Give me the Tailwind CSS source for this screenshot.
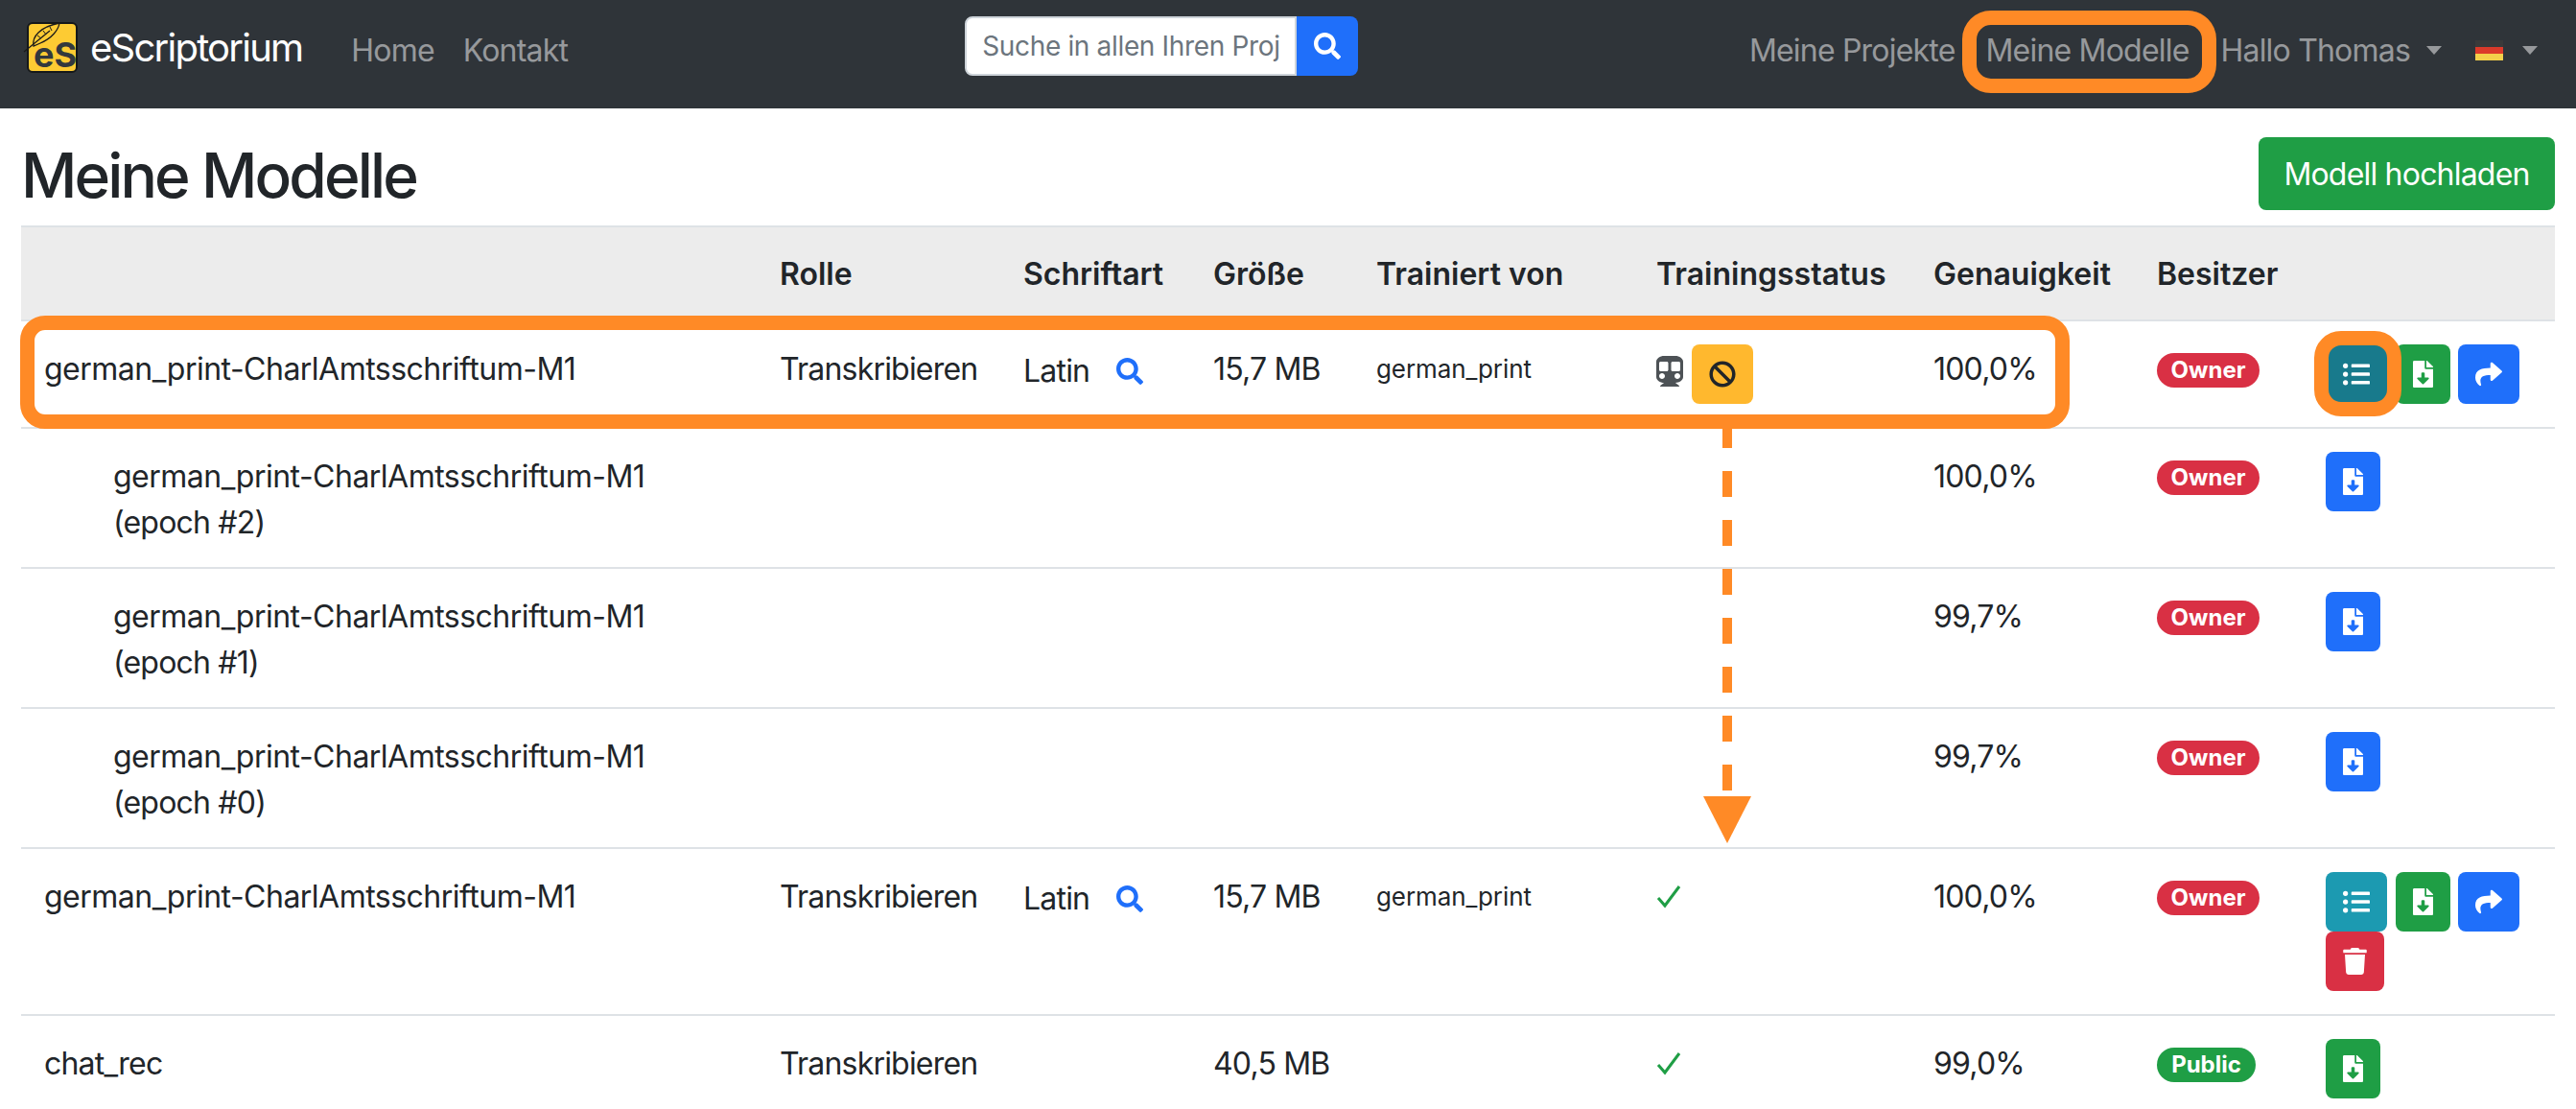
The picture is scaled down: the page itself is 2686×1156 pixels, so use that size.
<!DOCTYPE html>
<html lang="de">
<head>
  <meta charset="UTF-8" />
  <title>eScriptorium - Meine Modelle</title>
  <script src="https://cdn.jsdelivr.net/npm/@tailwindcss/browser@4"></script>
</head>
<body class="relative h-[1156px] overflow-hidden bg-white font-['Inter',sans-serif] text-[32px] leading-[48px] tracking-[-0.025em] text-[#212529]">
  <!-- Navbar -->
  <nav class="flex h-[113px] items-center bg-[#2f3439] pb-[8px] pl-[28px] pr-[40px]">
    <div class="relative mb-[7px] h-[53px] w-[53px] shrink-0 rounded-[6px] border-2 border-[#15181a] bg-[#fdcb33]">
      <svg class="absolute left-[-2px] top-[-2px] size-[53px] overflow-visible" viewBox="0 0 53 53" fill="none" stroke="#1a1a1a" stroke-width="1.3">
        <path d="M-3 31 L24 9" />
        <path d="M7 25 C5 15 14 5 34 1 C33 8 26 17 14 22 Z" />
        <path d="M11 14 L15 17 M17 9 L20 13 M24 5 L26 9" stroke-width="1" />
      </svg>
      <span class="absolute left-[5px] top-[14px] text-[36px] font-bold leading-[36px] tracking-normal text-[#33383d]">eS</span>
    </div>
    <a class="mb-[5px] ml-[13px] text-[40px] leading-[56px] tracking-[-0.044em] text-white">eScriptorium</a>
    <a class="ml-[51px] text-white/50">Home</a>
    <a class="ml-[30px] text-white/50">Kontakt</a>
    <form class="mb-[9px] ml-[414px] flex h-[62px] w-[410px] shrink-0">
      <input type="text" placeholder="Suche in allen Ihren Projekten" class="h-full w-[346px] rounded-l-[8px] border-2 border-[#ced4da] bg-white px-[16px] text-[28px] tracking-[-0.012em] outline-none placeholder:text-[#6c757d]" />
      <button type="button" class="flex w-[64px] items-center justify-center rounded-r-[8px] bg-[#1f6ffa]">
        <svg class="size-[28px]" viewBox="0 0 512 512" fill="#fff"><path d="M505 442.7L405.3 343c-4.5-4.5-10.6-7-17-7H372c27.6-35.3 44-79.7 44-128C416 93.1 322.9 0 208 0S0 93.1 0 208s93.1 208 208 208c48.3 0 92.7-16.4 128-44v16.3c0 6.4 2.5 12.5 7 17l99.7 99.7c9.4 9.4 24.6 9.4 33.9 0l28.3-28.3c9.4-9.4 9.4-24.6.1-34zM208 336c-70.7 0-128-57.2-128-128 0-70.7 57.2-128 128-128 70.7 0 128 57.2 128 128 0 70.7-57.2 128-128 128z"/></svg>
      </button>
    </form>
    <div class="ml-auto flex items-center text-white/50">
      <a>Meine Projekte</a>
      <a class="ml-[32px]">Meine Modelle</a>
      <a class="ml-[33px]">Hallo Thomas</a>
      <span class="ml-[17px] size-0 border-x-[8.5px] border-t-[9px] border-x-transparent border-t-[#97999c]"></span>
      <div class="ml-[35px] flex h-[21px] w-[29px] flex-col">
        <span class="h-[7px] bg-[#3a3a3a]"></span>
        <span class="h-[7px] bg-[#dc3a2a]"></span>
        <span class="h-[7px] bg-[#f4d04a]"></span>
      </div>
      <span class="ml-[20px] size-0 border-x-[8.5px] border-t-[9px] border-x-transparent border-t-[#97999c]"></span>
    </div>
  </nav>

  <main class="px-[22px]">
    <div class="flex h-[122px] justify-between">
      <h2 class="mt-[32px] text-[64px] font-medium leading-[76px] tracking-[-0.045em]">Meine Modelle</h2>
      <button class="mt-[30px] h-[76px] w-[309px] rounded-[8px] bg-[#1f9e45] pt-[2px] text-white">Modell hochladen</button>
    </div>

    <table class="w-[2642px] table-fixed border-separate border-spacing-0 text-left">
      <colgroup>
        <col class="w-[767px]" /><col class="w-[254px]" /><col class="w-[198px]" /><col class="w-[170px]" /><col class="w-[292px]" /><col class="w-[289px]" /><col class="w-[233px]" /><col class="w-[176px]" /><col class="w-[263px]" />
      </colgroup>
      <thead class="bg-[#ececec]">
        <tr class="tracking-normal [&>th]:border-y-2 [&>th]:border-[#dee2e6] [&>th]:px-[24px] [&>th]:pb-[23px] [&>th]:pt-[25px] [&>th]:font-semibold">
          <th></th><th>Rolle</th><th>Schriftart</th><th>Größe</th><th>Trainiert von</th><th>Trainingsstatus</th><th>Genauigkeit</th><th>Besitzer</th><th></th>
        </tr>
      </thead>
      <tbody class="[&_td]:border-b-2 [&_td]:border-[#dee2e6] [&_td]:px-[24px] [&_td]:pb-[22px] [&_td]:pt-[26px] [&_td]:align-top">
        <tr>
          <td class="tracking-[-0.016em]">german_print-CharlAmtsschriftum-M1</td>
          <td>Transkribieren</td>
          <td><span class="relative top-[2px] flex items-center gap-[28px]">Latin
            <svg class="size-[28px]" viewBox="0 0 512 512" fill="#1f6ffa"><path d="M505 442.7L405.3 343c-4.5-4.5-10.6-7-17-7H372c27.6-35.3 44-79.7 44-128C416 93.1 322.9 0 208 0S0 93.1 0 208s93.1 208 208 208c48.3 0 92.7-16.4 128-44v16.3c0 6.4 2.5 12.5 7 17l99.7 99.7c9.4 9.4 24.6 9.4 33.9 0l28.3-28.3c9.4-9.4 9.4-24.6.1-34zM208 336c-70.7 0-128-57.2-128-128 0-70.7 57.2-128 128-128 70.7 0 128 57.2 128 128 0 70.7-57.2 128-128 128z"/></svg></span></td>
          <td>15,7 MB</td>
          <td class="text-[26px] tracking-[-0.004em]">german_print</td>
          <td><div class="relative -top-[2px] flex items-center gap-[9px]">
            <svg class="-mt-[6px] h-[32px] w-[28px]" viewBox="0 0 448 512" fill="#4d5256"><path d="M448 96v256c0 51.815-61.624 96-130.022 96l62.98 49.721C386.905 502.417 383.562 512 376 512H72c-7.578 0-10.892-9.594-4.957-14.279L130.022 448C61.82 448 0 403.954 0 352V96C0 42.981 64 0 128 0h192c65 0 128 42.981 128 96zM200 232V120c0-13.255-10.745-24-24-24H72c-13.255 0-24 10.745-24 24v112c0 13.255 10.745 24 24 24h104c13.255 0 24-10.745 24-24zm200 0V120c0-13.255-10.745-24-24-24H272c-13.255 0-24 10.745-24 24v112c0 13.255 10.745 24 24 24h104c13.255 0 24-10.745 24-24zm-48 56c-26.51 0-48 21.49-48 48s21.49 48 48 48 48-21.49 48-48-21.49-48-48-48zm-256 0c-26.51 0-48 21.49-48 48s21.49 48 48 48 48-21.49 48-48-21.49-48-48-48z"/></svg>
            <span class="flex h-[62px] w-[64px] items-center justify-center rounded-[8px] bg-[#ffb82e]">
              <svg class="size-[28px]" viewBox="0 0 512 512" fill="#212529"><path d="M256 8C119.034 8 8 119.033 8 256s111.034 248 248 248 248-111.034 248-248S392.967 8 256 8zm130.108 117.892c65.448 65.448 70 165.481 20.677 235.637L150.47 105.216c70.204-49.356 170.226-44.735 235.638 20.676zM125.892 386.108c-65.448-65.448-70-165.481-20.677-235.637L361.53 406.784c-70.203 49.356-170.226 44.736-235.638-20.676z"/></svg>
            </span>
          </div></td>
          <td>100,0%</td>
          <td><span class="mt-[7px] flex h-[36px] w-[107px] items-center justify-center rounded-full bg-[#d93044] text-[24px] font-bold tracking-normal text-white">Owner</span></td>
          <td><div class="relative -top-[2px] flex flex-wrap gap-x-[8px]">
            <a class="flex h-[62px] w-[64px] items-center justify-center rounded-[8px] bg-[#187a8c]">
              <svg class="size-[28px]" viewBox="0 0 512 512" fill="#fff"><path d="M48 48a48 48 0 1 0 48 48 48 48 0 0 0-48-48zm0 160a48 48 0 1 0 48 48 48 48 0 0 0-48-48zm0 160a48 48 0 1 0 48 48 48 48 0 0 0-48-48zm448 16H176a16 16 0 0 0-16 16v32a16 16 0 0 0 16 16h320a16 16 0 0 0 16-16v-32a16 16 0 0 0-16-16zm0-320H176a16 16 0 0 0-16 16v32a16 16 0 0 0 16 16h320a16 16 0 0 0 16-16V80a16 16 0 0 0-16-16zm0 160H176a16 16 0 0 0-16 16v32a16 16 0 0 0 16 16h320a16 16 0 0 0 16-16v-32a16 16 0 0 0-16-16z"/></svg></a>
            <a class="ml-px flex h-[62px] w-[57px] items-center justify-center rounded-[8px] bg-[#1f9e45]">
              <svg class="h-[28px] w-[21px]" viewBox="0 0 384 512" fill="#fff"><path d="M224 136V0H24C10.7 0 0 10.7 0 24v464c0 13.3 10.7 24 24 24h336c13.3 0 24-10.7 24-24V160H248c-13.2 0-24-10.8-24-24zm76.45 211.36l-96.42 95.7c-6.65 6.61-17.39 6.61-24.04 0l-96.42-95.7C73.42 337.29 80.54 320 94.82 320H160v-80c0-8.84 7.16-16 16-16h32c8.84 0 16 7.16 16 16v80h65.18c14.28 0 21.4 17.29 11.27 27.36zM377 105L279.1 7c-4.5-4.5-10.6-7-17-7H256v128h128v-6.1c0-6.3-2.5-12.4-7-16.9z"/></svg></a>
            <a class="flex h-[62px] w-[64px] items-center justify-center rounded-[8px] bg-[#1f6ffa]">
              <svg class="size-[28px]" viewBox="0 0 512 512" fill="#fff"><path d="M503.691 189.836L327.687 37.851C312.281 24.546 288 35.347 288 56.015v80.053C127.371 137.907 0 170.1 0 322.326c0 61.441 39.581 122.309 83.333 154.132 13.653 9.931 33.111-2.533 28.077-18.631C66.066 312.814 132.917 274.316 288 272.085V360c0 20.7 24.3 31.453 39.687 18.164l176.004-152c11.071-9.562 11.086-26.753 0-36.328z"/></svg></a>
          </div></td>
        </tr>

        <tr>
          <td><div class="pl-[72px] tracking-[-0.016em]">german_print-CharlAmtsschriftum-M1<br /><span class="tracking-[-0.025em]">(epoch #2)</span></div></td>
          <td></td><td></td><td></td><td></td><td></td>
          <td>100,0%</td>
          <td><span class="mt-[7px] flex h-[36px] w-[107px] items-center justify-center rounded-full bg-[#d93044] text-[24px] font-bold tracking-normal text-white">Owner</span></td>
          <td><a class="relative -top-[2px] flex h-[62px] w-[57px] items-center justify-center rounded-[8px] bg-[#1f6ffa]">
            <svg class="h-[28px] w-[21px]" viewBox="0 0 384 512" fill="#fff"><path d="M224 136V0H24C10.7 0 0 10.7 0 24v464c0 13.3 10.7 24 24 24h336c13.3 0 24-10.7 24-24V160H248c-13.2 0-24-10.8-24-24zm76.45 211.36l-96.42 95.7c-6.65 6.61-17.39 6.61-24.04 0l-96.42-95.7C73.42 337.29 80.54 320 94.82 320H160v-80c0-8.84 7.16-16 16-16h32c8.84 0 16 7.16 16 16v80h65.18c14.28 0 21.4 17.29 11.27 27.36zM377 105L279.1 7c-4.5-4.5-10.6-7-17-7H256v128h128v-6.1c0-6.3-2.5-12.4-7-16.9z"/></svg></a></td>
        </tr>
        <tr>
          <td><div class="pl-[72px] tracking-[-0.016em]">german_print-CharlAmtsschriftum-M1<br /><span class="tracking-[-0.025em]">(epoch #1)</span></div></td>
          <td></td><td></td><td></td><td></td><td></td>
          <td>99,7%</td>
          <td><span class="mt-[7px] flex h-[36px] w-[107px] items-center justify-center rounded-full bg-[#d93044] text-[24px] font-bold tracking-normal text-white">Owner</span></td>
          <td><a class="relative -top-[2px] flex h-[62px] w-[57px] items-center justify-center rounded-[8px] bg-[#1f6ffa]">
            <svg class="h-[28px] w-[21px]" viewBox="0 0 384 512" fill="#fff"><path d="M224 136V0H24C10.7 0 0 10.7 0 24v464c0 13.3 10.7 24 24 24h336c13.3 0 24-10.7 24-24V160H248c-13.2 0-24-10.8-24-24zm76.45 211.36l-96.42 95.7c-6.65 6.61-17.39 6.61-24.04 0l-96.42-95.7C73.42 337.29 80.54 320 94.82 320H160v-80c0-8.84 7.16-16 16-16h32c8.84 0 16 7.16 16 16v80h65.18c14.28 0 21.4 17.29 11.27 27.36zM377 105L279.1 7c-4.5-4.5-10.6-7-17-7H256v128h128v-6.1c0-6.3-2.5-12.4-7-16.9z"/></svg></a></td>
        </tr>
        <tr>
          <td><div class="pl-[72px] tracking-[-0.016em]">german_print-CharlAmtsschriftum-M1<br /><span class="tracking-[-0.025em]">(epoch #0)</span></div></td>
          <td></td><td></td><td></td><td></td><td></td>
          <td>99,7%</td>
          <td><span class="mt-[7px] flex h-[36px] w-[107px] items-center justify-center rounded-full bg-[#d93044] text-[24px] font-bold tracking-normal text-white">Owner</span></td>
          <td><a class="relative -top-[2px] flex h-[62px] w-[57px] items-center justify-center rounded-[8px] bg-[#1f6ffa]">
            <svg class="h-[28px] w-[21px]" viewBox="0 0 384 512" fill="#fff"><path d="M224 136V0H24C10.7 0 0 10.7 0 24v464c0 13.3 10.7 24 24 24h336c13.3 0 24-10.7 24-24V160H248c-13.2 0-24-10.8-24-24zm76.45 211.36l-96.42 95.7c-6.65 6.61-17.39 6.61-24.04 0l-96.42-95.7C73.42 337.29 80.54 320 94.82 320H160v-80c0-8.84 7.16-16 16-16h32c8.84 0 16 7.16 16 16v80h65.18c14.28 0 21.4 17.29 11.27 27.36zM377 105L279.1 7c-4.5-4.5-10.6-7-17-7H256v128h128v-6.1c0-6.3-2.5-12.4-7-16.9z"/></svg></a></td>
        </tr>

        <tr>
          <td class="tracking-[-0.016em]">german_print-CharlAmtsschriftum-M1</td>
          <td>Transkribieren</td>
          <td><span class="relative top-[2px] flex items-center gap-[28px]">Latin
            <svg class="size-[28px]" viewBox="0 0 512 512" fill="#1f6ffa"><path d="M505 442.7L405.3 343c-4.5-4.5-10.6-7-17-7H372c27.6-35.3 44-79.7 44-128C416 93.1 322.9 0 208 0S0 93.1 0 208s93.1 208 208 208c48.3 0 92.7-16.4 128-44v16.3c0 6.4 2.5 12.5 7 17l99.7 99.7c9.4 9.4 24.6 9.4 33.9 0l28.3-28.3c9.4-9.4 9.4-24.6.1-34zM208 336c-70.7 0-128-57.2-128-128 0-70.7 57.2-128 128-128 70.7 0 128 57.2 128 128 0 70.7-57.2 128-128 128z"/></svg></span></td>
          <td>15,7 MB</td>
          <td class="text-[26px] tracking-[-0.004em]">german_print</td>
          <td><svg class="mt-[11px] size-[26px]" viewBox="0 0 26 26" fill="none" stroke="#1f9e45" stroke-width="3"><path d="M2 14l7 8L24 2" /></svg></td>
          <td>100,0%</td>
          <td><span class="mt-[7px] flex h-[36px] w-[107px] items-center justify-center rounded-full bg-[#d93044] text-[24px] font-bold tracking-normal text-white">Owner</span></td>
          <td><div class="relative -top-[2px] flex flex-wrap gap-x-[8px]">
            <a class="flex h-[62px] w-[64px] items-center justify-center rounded-[8px] bg-[#1c9ab1]">
              <svg class="size-[28px]" viewBox="0 0 512 512" fill="#fff"><path d="M48 48a48 48 0 1 0 48 48 48 48 0 0 0-48-48zm0 160a48 48 0 1 0 48 48 48 48 0 0 0-48-48zm0 160a48 48 0 1 0 48 48 48 48 0 0 0-48-48zm448 16H176a16 16 0 0 0-16 16v32a16 16 0 0 0 16 16h320a16 16 0 0 0 16-16v-32a16 16 0 0 0-16-16zm0-320H176a16 16 0 0 0-16 16v32a16 16 0 0 0 16 16h320a16 16 0 0 0 16-16V80a16 16 0 0 0-16-16zm0 160H176a16 16 0 0 0-16 16v32a16 16 0 0 0 16 16h320a16 16 0 0 0 16-16v-32a16 16 0 0 0-16-16z"/></svg></a>
            <a class="ml-px flex h-[62px] w-[57px] items-center justify-center rounded-[8px] bg-[#1f9e45]">
              <svg class="h-[28px] w-[21px]" viewBox="0 0 384 512" fill="#fff"><path d="M224 136V0H24C10.7 0 0 10.7 0 24v464c0 13.3 10.7 24 24 24h336c13.3 0 24-10.7 24-24V160H248c-13.2 0-24-10.8-24-24zm76.45 211.36l-96.42 95.7c-6.65 6.61-17.39 6.61-24.04 0l-96.42-95.7C73.42 337.29 80.54 320 94.82 320H160v-80c0-8.84 7.16-16 16-16h32c8.84 0 16 7.16 16 16v80h65.18c14.28 0 21.4 17.29 11.27 27.36zM377 105L279.1 7c-4.5-4.5-10.6-7-17-7H256v128h128v-6.1c0-6.3-2.5-12.4-7-16.9z"/></svg></a>
            <a class="flex h-[62px] w-[64px] items-center justify-center rounded-[8px] bg-[#1f6ffa]">
              <svg class="size-[28px]" viewBox="0 0 512 512" fill="#fff"><path d="M503.691 189.836L327.687 37.851C312.281 24.546 288 35.347 288 56.015v80.053C127.371 137.907 0 170.1 0 322.326c0 61.441 39.581 122.309 83.333 154.132 13.653 9.931 33.111-2.533 28.077-18.631C66.066 312.814 132.917 274.316 288 272.085V360c0 20.7 24.3 31.453 39.687 18.164l176.004-152c11.071-9.562 11.086-26.753 0-36.328z"/></svg></a>
            <a class="flex h-[62px] w-[61px] items-center justify-center rounded-[8px] bg-[#d93044]">
              <svg class="h-[28px] w-[25px]" viewBox="0 0 448 512" fill="#fff"><path d="M432 32H312l-9.4-18.7A24 24 0 0 0 281.1 0H166.8a23.72 23.72 0 0 0-21.4 13.3L136 32H16A16 16 0 0 0 0 48v32a16 16 0 0 0 16 16h416a16 16 0 0 0 16-16V48a16 16 0 0 0-16-16zM53.2 467a48 48 0 0 0 47.9 45h245.8a48 48 0 0 0 47.9-45L416 128H32z"/></svg></a>
          </div></td>
        </tr>

        <tr>
          <td>chat_rec</td>
          <td>Transkribieren</td>
          <td></td>
          <td>40,5 MB</td>
          <td></td>
          <td><svg class="mt-[11px] size-[26px]" viewBox="0 0 26 26" fill="none" stroke="#1f9e45" stroke-width="3"><path d="M2 14l7 8L24 2" /></svg></td>
          <td>99,0%</td>
          <td><span class="mt-[7px] flex h-[36px] w-[103px] items-center justify-center rounded-full bg-[#1f9e45] text-[24px] font-bold tracking-normal text-white">Public</span></td>
          <td><a class="relative -top-[2px] flex h-[62px] w-[57px] items-center justify-center rounded-[8px] bg-[#1f9e45]">
            <svg class="h-[28px] w-[21px]" viewBox="0 0 384 512" fill="#fff"><path d="M224 136V0H24C10.7 0 0 10.7 0 24v464c0 13.3 10.7 24 24 24h336c13.3 0 24-10.7 24-24V160H248c-13.2 0-24-10.8-24-24zm76.45 211.36l-96.42 95.7c-6.65 6.61-17.39 6.61-24.04 0l-96.42-95.7C73.42 337.29 80.54 320 94.82 320H160v-80c0-8.84 7.16-16 16-16h32c8.84 0 16 7.16 16 16v80h65.18c14.28 0 21.4 17.29 11.27 27.36zM377 105L279.1 7c-4.5-4.5-10.6-7-17-7H256v128h128v-6.1c0-6.3-2.5-12.4-7-16.9z"/></svg></a></td>
        </tr>
      </tbody>
    </table>
  </main>

  <!-- Annotations drawn over the screenshot -->
  <div class="absolute left-[2046px] top-[11px] h-[86px] w-[265px] rounded-[30px] border-[15px] border-[#ff8a26]"></div>
  <div class="absolute left-[21px] top-[329px] h-[118px] w-[2137px] rounded-[26px] border-[15px] border-[#ff8a26]"></div>
  <div class="absolute left-[2413px] top-[345px] h-[89px] w-[91px] rounded-[28px] border-[15px] border-[#ff8a26]"></div>
  <svg class="absolute left-[1776px] top-[440px] h-[445px] w-[50px]" viewBox="0 0 50 445" fill="#ff8a26">
    <line x1="25" y1="0" x2="25" y2="384" stroke="#ff8a26" stroke-width="10" stroke-dasharray="27 24" />
    <path d="M0 390 L50 390 L25 439 Z" />
  </svg>
</body>
</html>
